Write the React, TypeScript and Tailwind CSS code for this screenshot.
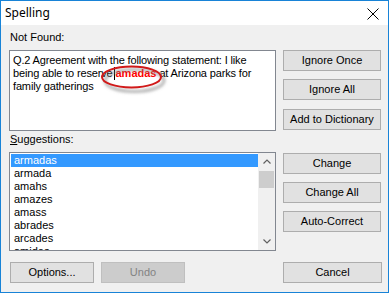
import React from "react";

function Btn({ children, w = "w-[98px]", disabled = false, className = "" }: { children: React.ReactNode; w?: string; disabled?: boolean; className?: string }) {
  return (
    <div
      className={`${w} h-[21px] flex items-center justify-center border ${
        disabled ? "bg-[#cccccc] border-[#bfbfbf] text-[#838383]" : "bg-[#e1e1e1] border-[#adadad] text-black"
      } text-[11px] leading-[13px] ${className}`}
    >
      {children}
    </div>
  );
}

export default function App() {
  const sug = ["armadas", "armada", "amahs", "amazes", "amass", "abrades", "arcades", "amides"];
  return (
    <div className="w-[389px] h-[293px] bg-white font-['Liberation_Sans',Arial,sans-serif]">
      <div className="w-[389px] h-[293px] border border-[#1883d7] flex flex-col">
        {/* title bar */}
        <div className="h-[24px] bg-white flex items-center justify-between pl-[4px] pr-[9px]">
          <span className="font-['Noto_Sans',sans-serif] text-[12px] leading-[16px] text-black mt-[-1px]">Spelling</span>
          <svg width="12" height="12" viewBox="0 0 12 12" className="mt-[1px]">
            <path d="M0.5 0.5 L11.5 11.5 M11.5 0.5 L0.5 11.5" stroke="#000" strokeWidth="1" fill="none" />
          </svg>
        </div>
        {/* body */}
        <div className="flex-1 bg-[#f0f0f0] pl-[8px] flex flex-col text-black">
          <div className="h-[25px] pt-[6px] pl-[1px] text-[11px] leading-[13px]">Not Found:</div>
          <div className="flex">
            <div className="w-[267px] h-[81px] bg-white border border-[#828790] px-[3px] pt-[3px] text-[11px] leading-[13px] tracking-[-0.15px] whitespace-nowrap">
              Q.2 Agreement with the following statement: I like
              <br />
              being able to reserve{" "}
              <span className="relative inline-block">
                <span className="absolute left-[-2px] top-[0px] w-[1px] h-[13px] bg-black" />
                <span className="font-bold text-[#ff0000] tracking-normal">amadas</span>
                <svg width="80" height="40" viewBox="0 0 80 40" className="absolute left-[-22px] top-[-10px] overflow-visible">
                  <defs>
                    <filter id="blur" x="-20%" y="-40%" width="140%" height="180%">
                      <feGaussianBlur stdDeviation="1.4" />
                    </filter>
                  </defs>
                  <ellipse cx="40.5" cy="23.5" rx="29.5" ry="11" fill="none" stroke="#7a7a7a" strokeOpacity="0.55" strokeWidth="3" filter="url(#blur)" />
                  <ellipse cx="37.5" cy="20" rx="29.5" ry="10.5" fill="none" stroke="#d11a1a" strokeWidth="2" />
                </svg>
              </span>{" "}
              at Arizona parks for
              <br />
              family gatherings
            </div>
            <div className="ml-[7px] flex flex-col">
              <Btn>Ignore Once</Btn>
              <Btn className="mt-[8px]">Ignore All</Btn>
              <Btn className="mt-[9px]">Add to Dictionary</Btn>
            </div>
          </div>
          <div className="h-[21px] pt-[2px] pl-[1px] text-[11px] leading-[13px]">
            <span className="underline underline-offset-[1px]">S</span>uggestions:
          </div>
          <div className="flex">
            <div className="w-[267px] h-[99px] bg-white border border-[#828790] flex overflow-hidden">
              <div className="flex-1 pt-[1px] pl-[1px]">
                {sug.map((s, i) => (
                  <div
                    key={i}
                    className={`h-[13px] pl-[3px] text-[11px] leading-[13px] ${i === 0 ? "bg-[#3399ff] text-white" : "text-black"}`}
                  >
                    {s}
                  </div>
                ))}
              </div>
              <div className="w-[17px] bg-[#f0f0f0] flex flex-col items-center">
                <div className="h-[17px] w-[17px] flex items-center justify-center">
                  <svg width="8" height="5" viewBox="0 0 8 5">
                    <path d="M0.5 4.5 L4 1 L7.5 4.5" stroke="#606060" strokeWidth="1.2" fill="none" />
                  </svg>
                </div>
                <div className="mt-[1px] w-[15px] h-[17px] bg-[#cdcdcd]" />
                <div className="flex-1" />
                <div className="h-[17px] w-[17px] flex items-center justify-center">
                  <svg width="8" height="5" viewBox="0 0 8 5">
                    <path d="M0.5 0.5 L4 4 L7.5 0.5" stroke="#606060" strokeWidth="1.2" fill="none" />
                  </svg>
                </div>
              </div>
            </div>
            <div className="ml-[7px] pt-[1px] flex flex-col gap-[8px]">
              <Btn>Change</Btn>
              <Btn>Change All</Btn>
              <Btn>Auto-Correct</Btn>
            </div>
          </div>
          <div className="mt-[11px] flex">
            <Btn w="w-[84px]" className="ml-[1px]">Options...</Btn>
            <Btn w="w-[84px]" disabled className="ml-[7px]">Undo</Btn>
            <Btn w="w-[99px]" className="ml-[98px]">Cancel</Btn>
          </div>
        </div>
      </div>
    </div>
  );
}
